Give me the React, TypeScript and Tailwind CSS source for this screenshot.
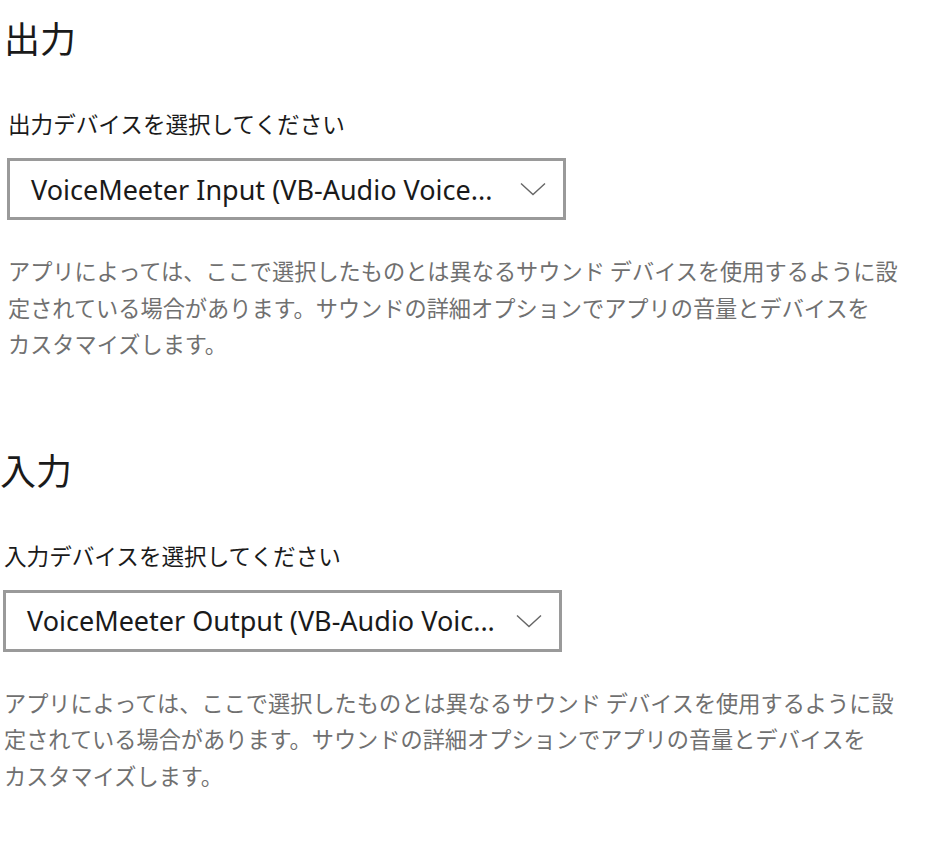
import React from "react";

const cjk = "font-['Noto_Sans_CJK_JP','Noto_Sans',sans-serif]";

function Chevron() {
  return (
    <svg width="26" height="14" viewBox="0 0 26 14" fill="none" className="shrink-0">
      <path d="M1 1.5 L13 12.5 L25 1.5" stroke="#666666" strokeWidth="1.4" />
    </svg>
  );
}

function Section({
  title,
  label,
  value,
  className,
}: {
  title: string;
  label: string;
  value: string;
  className?: string;
}) {
  return (
    <div className={"flex flex-col " + (className ?? "")}>
      <div className={`${cjk} -ml-[2px] text-[36px] leading-[44px] text-[#1a1a1a]`}>{title}</div>
      <div className={`${cjk} mt-[50px] ml-[2px] text-[22.6px] leading-[30px] text-[#1a1a1a]`}>{label}</div>
      <div className="mt-[19px] ml-[1px] flex h-[62px] w-[559px] items-center justify-between border-[3px] border-[#9a9a9a] bg-white pl-[21px] pr-[17px]">
        <span className="font-['Noto_Sans',sans-serif] text-[27px] leading-none text-[#1a1a1a] whitespace-nowrap">
          {value}
        </span>
        <Chevron />
      </div>
      <div className={`${cjk} mt-[32px] ml-[2px] text-[22.2px] leading-[36.5px] text-[#707070] whitespace-nowrap`}>
        アプリによっては、ここで選択したものとは異なるサウンド デバイスを使用するように設
        <br />
        定されている場合があります。サウンドの詳細オプションでアプリの音量とデバイスを
        <br />
        カスタマイズします。
      </div>
    </div>
  );
}

export default function App() {
  return (
    <div className="min-h-[846px] w-[950px] bg-white pl-[2px] pt-[15px]">
      <Section
        className="ml-[4px]"
        title="出力"
        label="出力デバイスを選択してください"
        value="VoiceMeeter Input (VB-Audio Voice..."
      />
      <Section
        className="mt-[85px]"
        title="入力"
        label="入力デバイスを選択してください"
        value="VoiceMeeter Output (VB-Audio Voic..."
      />
    </div>
  );
}
